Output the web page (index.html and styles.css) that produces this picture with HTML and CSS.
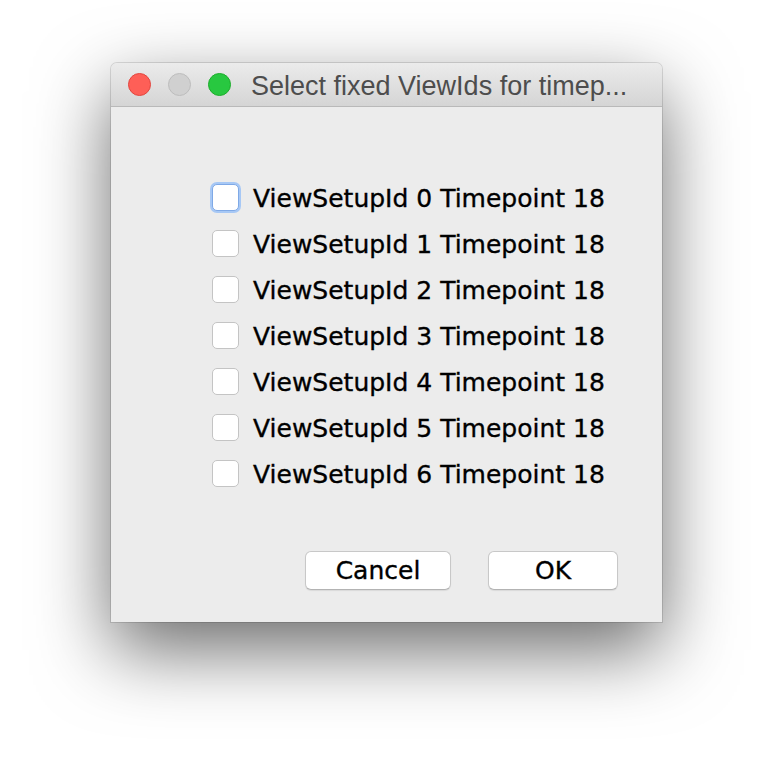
FILE: index.html
```html
<!DOCTYPE html>
<html>
<head>
<meta charset="utf-8">
<link rel="stylesheet" href="styles.css">
</head>
<body>
<div class="window">
  <div class="titlebar">
    <span class="light red"></span>
    <span class="light gray"></span>
    <span class="light green"></span>
    <span class="title">Select fixed ViewIds for timep...</span>
  </div>
  <div class="content">
    <ul class="list">
      <li class="row"><span class="box focus"></span><span class="label">ViewSetupId 0 Timepoint 18</span></li>
      <li class="row"><span class="box"></span><span class="label">ViewSetupId 1 Timepoint 18</span></li>
      <li class="row"><span class="box"></span><span class="label">ViewSetupId 2 Timepoint 18</span></li>
      <li class="row"><span class="box"></span><span class="label">ViewSetupId 3 Timepoint 18</span></li>
      <li class="row"><span class="box"></span><span class="label">ViewSetupId 4 Timepoint 18</span></li>
      <li class="row"><span class="box"></span><span class="label">ViewSetupId 5 Timepoint 18</span></li>
      <li class="row"><span class="box"></span><span class="label">ViewSetupId 6 Timepoint 18</span></li>
    </ul>
    <div class="buttons">
      <button class="btn cancel">Cancel</button>
      <button class="btn ok">OK</button>
    </div>
  </div>
</div>
</body>
</html>
```
FILE: styles.css
```css
html, body {
  margin: 0;
  padding: 0;
  background: #ffffff;
}
body {
  width: 774px;
  height: 782px;
  padding: 63px 0 0 111px;
  box-sizing: border-box;
  overflow: hidden;
}
.window {
  width: 551px;
  height: 559px;
  background: #ececec;
  border-radius: 6px 6px 0 0;
  box-shadow: 0 0 0 1px rgba(0,0,0,0.12), 0 28px 75px rgba(0,0,0,0.58);
  display: flex;
  flex-direction: column;
}
.titlebar {
  height: 43px;
  flex: none;
  display: flex;
  align-items: center;
  padding-left: 17px;
  background: linear-gradient(#ebebeb, #d5d5d5);
  border-bottom: 1px solid #b9b9b9;
  border-radius: 6px 6px 0 0;
}
.light {
  width: 23px;
  height: 23px;
  border-radius: 50%;
  margin-right: 17px;
  box-sizing: border-box;
}
.red { background: #fe5f57; border: 1px solid #e2463f; }
.gray { background: #d0d0d0; border: 1px solid #bdbdbd; }
.green { background: #28c840; border: 1px solid #1dad2b; }
.title {
  margin-left: 3px;
  margin-top: 3px;
  font-family: "Liberation Sans", Arial, sans-serif;
  font-size: 27px;
  color: #4d4d4d;
  white-space: nowrap;
}
.content {
  flex: 1;
  display: flex;
  flex-direction: column;
}
.list {
  list-style: none;
  margin: 0;
  padding: 77px 0 0 101px;
  display: flex;
  flex-direction: column;
  gap: 19px;
}
.row {
  display: flex;
  align-items: center;
  height: 27px;
}
.box {
  width: 27px;
  height: 27px;
  box-sizing: border-box;
  background: #ffffff;
  border: 1px solid #c4c4c4;
  border-radius: 5px;
  margin-right: 14px;
  flex: none;
}
.box.focus {
  border: 1px solid #7fa9e6;
  box-shadow: 0 0 0 2px #a7c8f5;
}
.label {
  margin-top: 2px;
  font-family: "DejaVu Sans", "Liberation Sans", sans-serif;
  font-size: 25px;
  color: #000000;
  white-space: nowrap;
  -webkit-text-stroke: 0.35px #000;
}
.buttons {
  display: flex;
  justify-content: flex-end;
  gap: 37px;
  padding: 64px 44px 0 0;
}
.btn {
  height: 39px;
  background: #ffffff;
  border: 1px solid #c8c8c8;
  border-bottom-color: #b3b3b3;
  border-radius: 6px;
  font-family: "DejaVu Sans", "Liberation Sans", sans-serif;
  font-size: 25px;
  color: #000;
  padding: 0;
  box-shadow: 0 1px 1px rgba(0,0,0,0.08);
  -webkit-text-stroke: 0.35px #000;
}
.cancel { width: 146px; }
.ok { width: 130px; }
```
